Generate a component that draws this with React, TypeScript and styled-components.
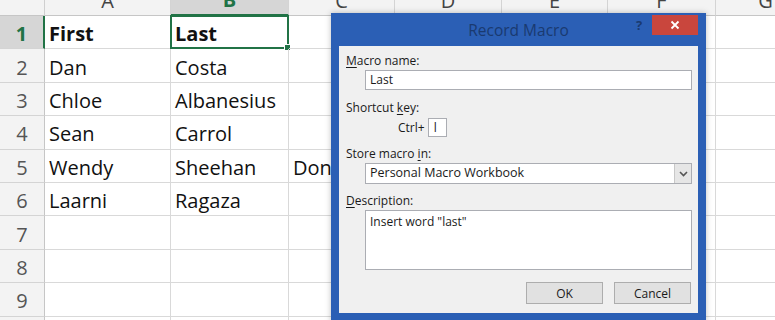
import React from "react";
import styled, { createGlobalStyle } from "styled-components";

const GlobalStyle = createGlobalStyle`
  html, body {
    margin: 0;
    padding: 0;
    background: #ffffff;
    overflow: hidden;
  }
`;

const columns = ["A", "B", "C", "D", "E", "F", "G"];
// row header, then A..G
const colWidths = [45, 126, 118, 106, 107, 106, 108, 100];

const rows: string[][] = [
  ["First", "Last", ""],
  ["Dan", "Costa", ""],
  ["Chloe", "Albanesius", ""],
  ["Sean", "Carrol", ""],
  ["Wendy", "Sheehan", "Don"],
  ["Laarni", "Ragaza", ""],
  ["", "", ""],
  ["", "", ""],
  ["", "", ""],
  ["", "", ""],
];

const App: React.FunctionComponent = (): React.ReactElement => {
  return (
    <Root>
      <GlobalStyle />
      <Sheet>
        <Corner />
        {columns.map((c) => (
          <ColHeader key={c} selected={c === "B"}>
            {c}
          </ColHeader>
        ))}
        {rows.map((r, i) => (
          <React.Fragment key={i}>
            <RowHeader selected={i === 0}>{i + 1}</RowHeader>
            {columns.map((c, j) => (
              <Cell key={c} bold={i === 0}>
                {r[j] || ""}
                {i === 0 && c === "B" && <Selection />}
              </Cell>
            ))}
          </React.Fragment>
        ))}
      </Sheet>

      <Dialog>
        <TitleBar>
          <Title>Record Macro</Title>
          <Help>?</Help>
          <CloseButton>
            <svg width="10" height="10" viewBox="0 0 10 10">
              <path
                d="M1.5 1.5 L8.5 8.5 M8.5 1.5 L1.5 8.5"
                stroke="#ffffff"
                strokeWidth="1.8"
              />
            </svg>
          </CloseButton>
        </TitleBar>
        <Client>
          <Label>
            <u>M</u>acro name:
          </Label>
          <TextBox>Last</TextBox>

          <Label>
            Shortcut <u>k</u>ey:
          </Label>
          <ShortcutRow>
            <span>Ctrl+</span>
            <KeyBox>l</KeyBox>
          </ShortcutRow>

          <Label>
            Store macro <u>i</u>n:
          </Label>
          <Select>
            <span>Personal Macro Workbook</span>
            <DropButton>
              <svg width="9" height="6" viewBox="0 0 9 6">
                <path
                  d="M1 1 L4.5 4.5 L8 1"
                  stroke="#555"
                  strokeWidth="1.6"
                  fill="none"
                />
              </svg>
            </DropButton>
          </Select>

          <Label>
            <u>D</u>escription:
          </Label>
          <TextArea>Insert word "last"</TextArea>

          <Buttons>
            <Button>OK</Button>
            <Button>Cancel</Button>
          </Buttons>
        </Client>
      </Dialog>
    </Root>
  );
};

const Root = styled.div`
  position: relative;
  width: 775px;
  height: 320px;
  overflow: hidden;
  font-family: "Open Sans", "Noto Sans", sans-serif;
`;

const Sheet = styled.div`
  display: grid;
  width: max-content;
  grid-template-columns: ${colWidths.map((w) => `${w}px`).join(" ")};
  grid-template-rows: 16px repeat(10, 33.4px);
`;

const Corner = styled.div`
  background: #f3f3f3;
  border-right: 1px solid #cfcfcf;
  border-bottom: 1px solid #c6c6c6;
  box-sizing: border-box;
`;

const ColHeader = styled.div<{ selected?: boolean }>`
  box-sizing: border-box;
  display: flex;
  align-items: flex-end;
  justify-content: center;
  overflow: hidden;
  padding-bottom: 4px;
  font-size: 20px;
  line-height: 20px;
  background: ${(p) => (p.selected ? "#d6d6d6" : "#f3f3f3")};
  color: ${(p) => (p.selected ? "#217346" : "#444444")};
  font-weight: ${(p) => (p.selected ? 700 : 400)};
  border-right: 1px solid #d4d4d4;
  border-bottom: ${(p) =>
    p.selected ? "2px solid #217346" : "1px solid #c6c6c6"};
`;

const RowHeader = styled.div<{ selected?: boolean }>`
  box-sizing: border-box;
  display: flex;
  align-items: center;
  justify-content: center;
  padding-top: 3px;
  font-size: 20px;
  background: ${(p) => (p.selected ? "#d6d6d6" : "#f3f3f3")};
  color: ${(p) => (p.selected ? "#217346" : "#555555")};
  font-weight: ${(p) => (p.selected ? 700 : 400)};
  border-right: ${(p) =>
    p.selected ? "2px solid #217346" : "1px solid #c6c6c6"};
  border-bottom: 1px solid #d4d4d4;
`;

const Cell = styled.div<{ bold?: boolean }>`
  position: relative;
  box-sizing: border-box;
  display: flex;
  align-items: center;
  padding: 3px 0 0 4px;
  white-space: nowrap;
  font-size: 20px;
  color: #111111;
  font-weight: ${(p) => (p.bold ? 700 : 400)};
  border-right: 1px solid #d9d9d9;
  border-bottom: 1px solid #d9d9d9;
`;

const Selection = styled.div`
  position: absolute;
  left: -1px;
  top: -1px;
  right: -1px;
  bottom: -1px;
  border: 2px solid #217346;

  &::after {
    content: "";
    position: absolute;
    right: -4px;
    bottom: -4px;
    width: 5px;
    height: 5px;
    background: #217346;
    border: 1px solid #ffffff;
  }
`;

const Dialog = styled.div`
  position: absolute;
  left: 331px;
  top: 13px;
  width: 375px;
  height: 310px;
  box-sizing: border-box;
  background: #2b5fb5;
  padding: 0 8px 7px;
  display: flex;
  flex-direction: column;
  box-shadow: 0 0 6px rgba(0, 0, 0, 0.25);
`;

const TitleBar = styled.div`
  position: relative;
  height: 33px;
  flex: none;
  display: flex;
  align-items: center;
  justify-content: center;
`;

const Title = styled.div`
  font-size: 15.5px;
  color: #1a3a70;
  margin-top: 1px;
`;

const Help = styled.div`
  position: absolute;
  left: 297px;
  top: 3px;
  font-size: 13px;
  font-weight: 700;
  color: #1a3a70;
`;

const CloseButton = styled.div`
  position: absolute;
  left: 313px;
  top: 2px;
  width: 46px;
  height: 20px;
  background: #c9463d;
  display: flex;
  align-items: center;
  justify-content: center;
`;

const Client = styled.div`
  height: 267px;
  flex: none;
  box-sizing: border-box;
  background: #f0f0f0;
  padding: 7px 6px 0 7px;
  display: flex;
  flex-direction: column;
  font-size: 12px;
  color: #1a1a1a;
`;

const Label = styled.div`
  line-height: 16px;

  u {
    text-decoration-thickness: 1px;
    text-underline-offset: 2px;
  }
`;

const Field = styled.div`
  box-sizing: border-box;
  margin-left: 19px;
  border: 1px solid #abadb3;
  background: #ffffff;
  padding-left: 4px;
  line-height: 18px;
`;

const TextBox = styled(Field)`
  height: 20px;
  margin-top: 1px;
  margin-bottom: 10px;
`;

const ShortcutRow = styled.div`
  display: flex;
  align-items: center;
  gap: 3px;
  margin-left: 52px;
  margin-top: 2px;
  margin-bottom: 9px;
`;

const KeyBox = styled(Field)`
  margin-left: 0;
  width: 19px;
  height: 19px;
  padding-left: 5px;
`;

const Select = styled(Field)`
  height: 21px;
  margin-top: 1px;
  margin-bottom: 9px;
  display: flex;
  justify-content: space-between;
  align-items: stretch;
  font-size: 12.5px;
`;

const DropButton = styled.div`
  width: 16px;
  background: #e6e6e6;
  border-left: 1px solid #c8c8c8;
  display: flex;
  align-items: center;
  justify-content: center;
`;

const TextArea = styled(Field)`
  height: 60px;
  margin-top: 1px;
  padding-top: 2px;
`;

const Buttons = styled.div`
  display: flex;
  justify-content: flex-end;
  gap: 11px;
  margin-top: 12px;
  margin-right: 1px;
`;

const Button = styled.div`
  box-sizing: border-box;
  width: 77px;
  height: 22px;
  background: #e1e1e1;
  border: 1px solid #adadad;
  display: flex;
  align-items: center;
  justify-content: center;
`;

export default App;
